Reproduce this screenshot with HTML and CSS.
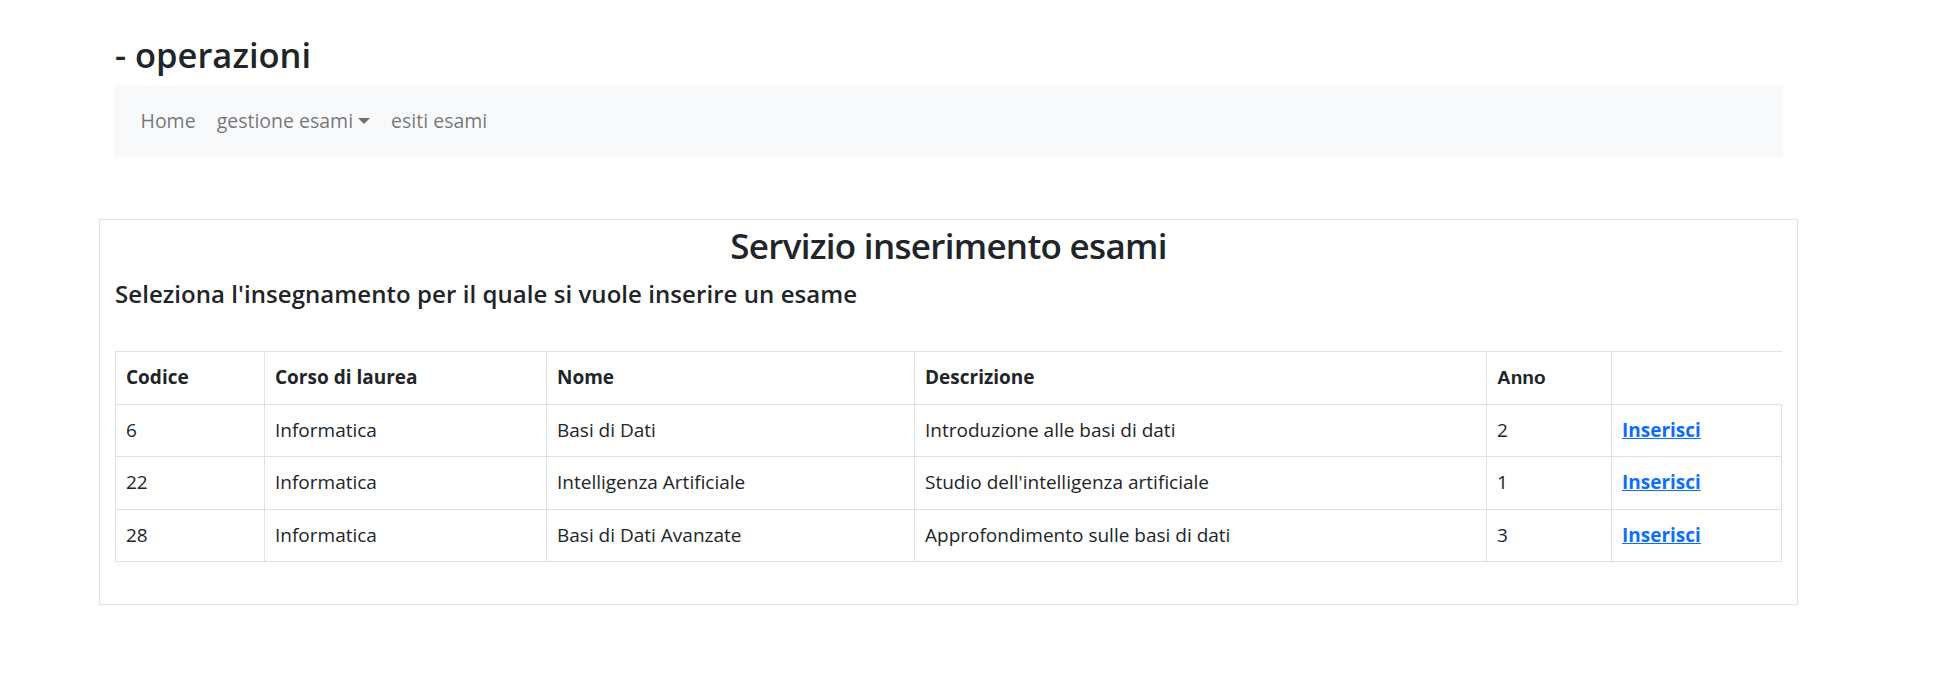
FILE: index.html
```html
<!DOCTYPE html>
<html lang="it">
<head>
<meta charset="utf-8">
<title>Servizio inserimento esami</title>
<link rel="stylesheet" href="styles.css">
</head>
<body>
<header class="top">
  <h3 class="page-title">- operazioni</h3>
  <nav class="navbar">
    <a class="nav-link" href="#">Home</a>
    <a class="nav-link dropdown-toggle" href="#">gestione esami</a>
    <a class="nav-link" href="#">esiti esami</a>
  </nav>
</header>
<main class="card">
  <h2 class="card-title">Servizio inserimento esami</h2>
  <h5 class="card-subtitle">Seleziona l'insegnamento per il quale si vuole inserire un esame</h5>
  <table class="table">
    <colgroup>
      <col class="c-codice"><col class="c-corso"><col class="c-nome"><col class="c-desc"><col class="c-anno"><col class="c-act">
    </colgroup>
    <thead>
      <tr><th>Codice</th><th>Corso di laurea</th><th>Nome</th><th>Descrizione</th><th class="th-anno">Anno</th></tr>
    </thead>
    <tbody>
      <tr><td>6</td><td>Informatica</td><td>Basi di Dati</td><td>Introduzione alle basi di dati</td><td>2</td><td><a class="link" href="#">Inserisci</a></td></tr>
      <tr><td>22</td><td>Informatica</td><td>Intelligenza Artificiale</td><td>Studio dell'intelligenza artificiale</td><td>1</td><td><a class="link" href="#">Inserisci</a></td></tr>
      <tr><td>28</td><td>Informatica</td><td>Basi di Dati Avanzate</td><td>Approfondimento sulle basi di dati</td><td>3</td><td><a class="link" href="#">Inserisci</a></td></tr>
    </tbody>
  </table>
</main>
</body>
</html>
```
FILE: styles.css
```css
* { box-sizing: border-box; }
html, body { margin: 0; padding: 0; background: #fff; }
body {
  font-family: "Open Sans", "Noto Sans", sans-serif;
  font-size: 19px;
  line-height: 30px;
  color: #212529;
}
.top {
  width: 1669px;
  margin-left: 114px;
  padding-top: 34px;
}
.page-title {
  margin: 0 0 9px 1px;
  font-size: 34.5px;
  line-height: 42px;
  font-weight: 600;
}
.navbar {
  display: flex;
  align-items: center;
  background: #f8f9fa;
  padding: 11px 16px;
  height: 72px;
}
.nav-link {
  color: rgba(0, 0, 0, 0.55);
  text-decoration: none;
  padding: 10px 10.5px;
  font-size: 19.5px;
  line-height: 30px;
}
.dropdown-toggle::after {
  content: "";
  display: inline-block;
  margin-left: 5px;
  vertical-align: 4px;
  border-top: 6px solid;
  border-left: 6px solid transparent;
  border-right: 6px solid transparent;
  border-bottom: 0;
}
.card {
  display: block;
  width: 1699px;
  margin: 62px 0 0 99px;
  border: 1px solid #dee2e6;
  padding: 2px 15px 22px;
}
.card-title {
  margin: 0 0 9px;
  text-align: center;
  font-size: 35px;
  letter-spacing: -0.7px;
  line-height: 48px;
  font-weight: 600;
}
.card-subtitle {
  margin: 0 0 42px;
  font-size: 24px;
  letter-spacing: 0.06px;
  line-height: 30px;
  font-weight: 600;
}
.table {
  width: 1666px;
  border-collapse: collapse;
  table-layout: fixed;
  margin-bottom: 20px;
}
.table tr { border-top: 1px solid #dee2e6; border-bottom: 1px solid #dee2e6; }
.table th, .table td {
  border-left: 1px solid #dee2e6;
  border-right: 1px solid #dee2e6;
  padding: 10px 10px;
  line-height: 31.5px;
  text-align: left;
  vertical-align: top;
}
.table th { font-weight: 700; }
.table .th-anno { font-family: "Liberation Sans", Arial, sans-serif; }
.c-codice { width: 149px; }
.c-corso { width: 282px; }
.c-nome { width: 368px; }
.c-desc { width: 572px; }
.c-anno { width: 125px; }
.c-act { width: 170px; }
.link { color: #0d6efd; font-weight: 700; text-decoration: underline; }
```
